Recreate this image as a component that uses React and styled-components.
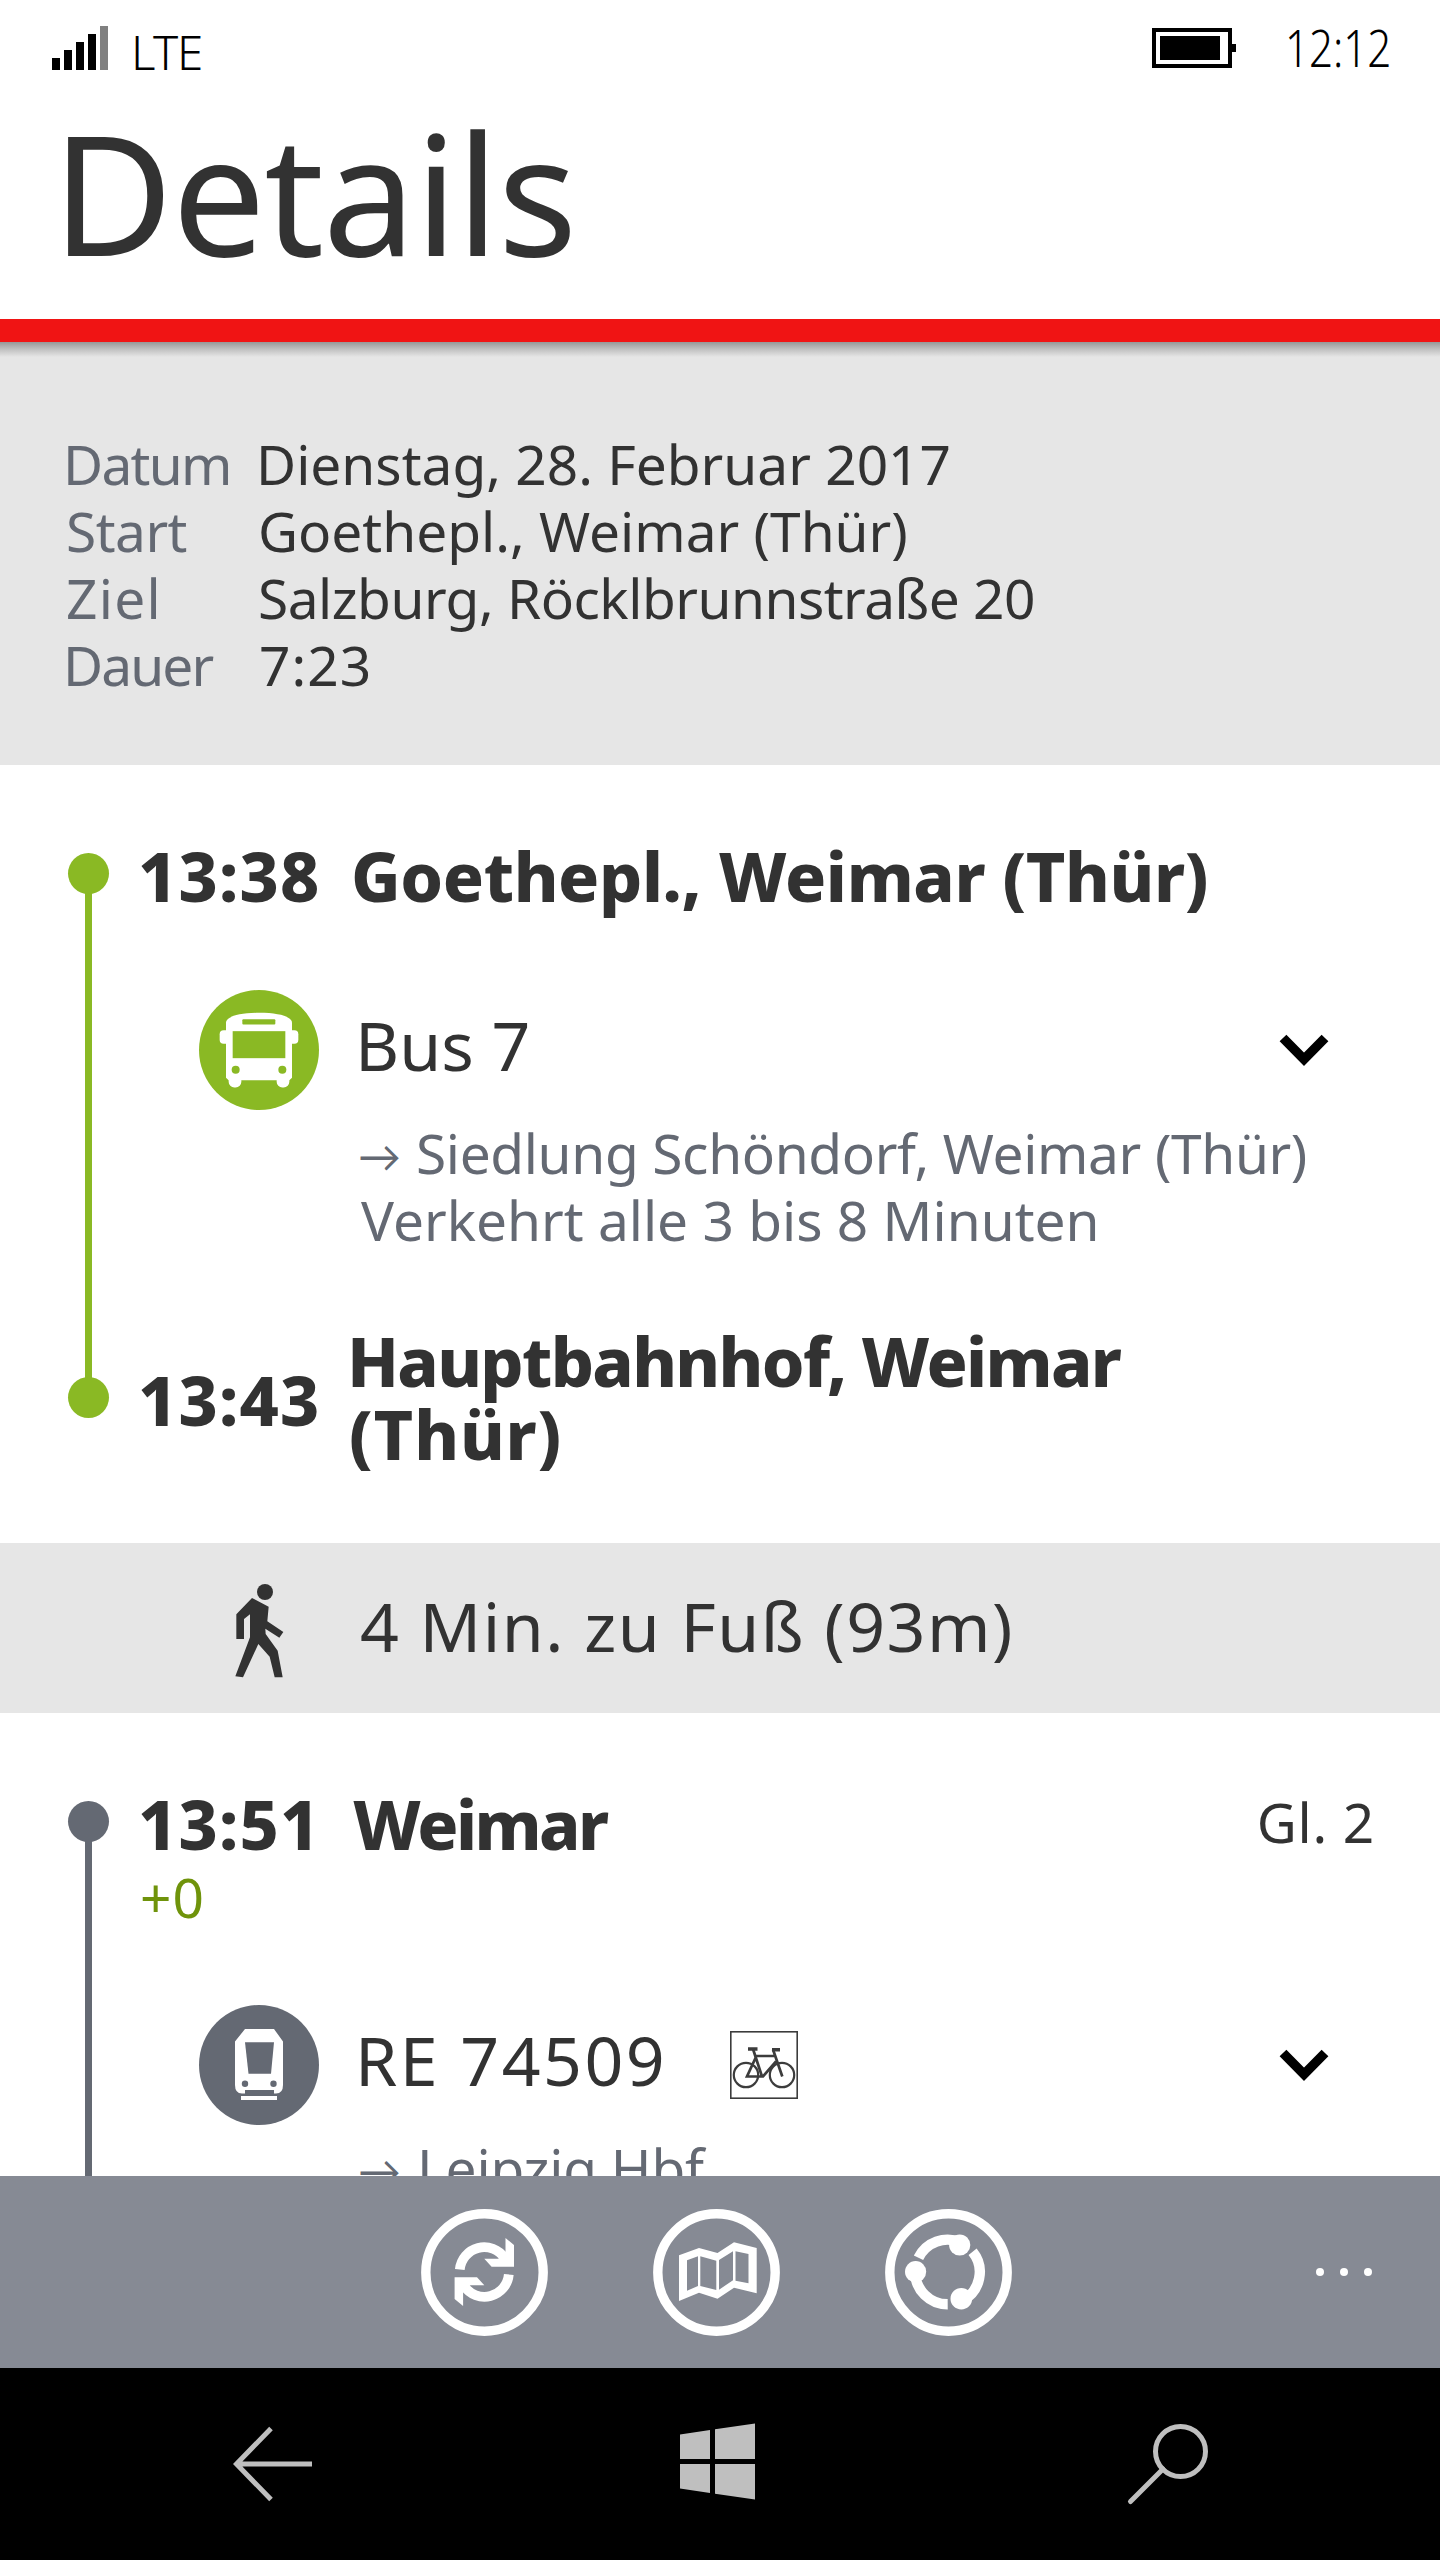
import React from "react";
import styled, { createGlobalStyle } from "styled-components";

const GlobalStyle = createGlobalStyle`
  *, *::before, *::after { box-sizing: border-box; }
  body { margin: 0; background: #fff; }
  svg { display: block; flex: none; }
`;

const INK = "#323232";
const GREY = "#646973";
const GREEN = "#8ab924";
const BAR = "#868a94";

const Screen = styled.main`
  width: 1440px;
  height: 2560px;
  display: flex;
  flex-direction: column;
  overflow: hidden;
  background: #fff;
  color: ${INK};
  font-family: "Noto Sans", "Open Sans", sans-serif;
  white-space: nowrap;
`;

const StatusBar = styled.div`
  height: 100px;
  flex: none;
  display: flex;
  align-items: flex-start;
  padding: 26px 52px 0;
  color: #000;
  font-weight: 300;
`;

const Network = styled.span`
  margin: 2px 0 0 23px;
  font-size: 47.5px;
  line-height: 48px;
  letter-spacing: -1.4px;
`;

const Battery = styled.svg`
  margin: 2px 0 0 auto;
`;

const Clock = styled.span`
  width: 104px;
  margin-left: 48px;
  margin-top: -5px;
  font-size: 51px;
  line-height: 52px;
  transform: translateX(1px) scaleX(0.825);
  transform-origin: 0 50%;
`;

const Header = styled.header`
  height: 242px;
  flex: none;
  padding: 9px 52px 0;
  border-bottom: 23px solid #f01414;
`;

const Title = styled.h1`
  margin: 0;
  font-size: 166px;
  line-height: 167px;
  font-weight: 400;
  letter-spacing: -1.3px;
`;

const Summary = styled.dl`
  height: 423px;
  flex: none;
  margin: 0;
  padding: 88px 0 0 63px;
  background: linear-gradient(#979797, #c4c4c4 8px, #e6e6e6 15px);
`;

const SummaryRow = styled.div`
  display: grid;
  grid-template-columns: 193px 1fr;
  font-size: 55px;
  line-height: 67px;
`;

const Label = styled.dt`
  color: ${GREY};
  margin-left: ${(p) => p.$shift || 0}px;
  letter-spacing: ${(p) => p.$track || 0}px;
`;

const Value = styled.dd`
  margin: 0 0 0 ${(p) => p.$shift || 0}px;
  letter-spacing: ${(p) => p.$track || 0}px;
`;

const Leg = styled.section`
  height: ${(p) => p.$height}px;
  flex: none;
  display: flex;
  padding-left: 68px;
  overflow: hidden;
`;

const Rail = styled.div`
  width: 41px;
  flex: none;
  display: flex;
  flex-direction: column;
  align-items: center;
  padding: 88px 0 ${(p) => p.$end}px;
  color: ${(p) => p.$color};
`;

const Dot = styled.i`
  width: 41px;
  height: 41px;
  flex: none;
  border-radius: 50%;
  background: currentColor;
`;

const Line = styled.i`
  width: 7px;
  flex: 1;
  margin: -2px 0;
  background: currentColor;
`;

const LegBody = styled.div`
  flex: 1;
  padding-top: 74px;
`;

const Stop = styled.div`
  display: flex;
  align-items: ${(p) => (p.$centered ? "center" : "flex-start")};
  margin-top: ${(p) => (p.$centered ? 71 : 0)}px;
  padding: 0 68px 0 29px;
  font-size: 68px;
  line-height: 73px;
  font-weight: 800;
`;

const Time = styled.time`
  width: 213px;
  flex: none;
  padding-top: ${(p) => p.$drop || 0}px;
  letter-spacing: 1.2px;
`;

const Station = styled.div`
  flex: 1;
`;

const StationLine = styled.span`
  display: block;
  margin-left: ${(p) => p.$shift || 0}px;
  letter-spacing: ${(p) => p.$track || 0}px;
`;

const Platform = styled.span`
  padding-top: 1px;
  font-size: 55px;
  line-height: 68px;
  font-weight: 400;
  letter-spacing: 0.7px;
  margin-right: -3px;
`;

const Delay = styled.div`
  margin-top: 3px;
  padding-left: 31px;
  font-size: 55px;
  line-height: 67px;
  letter-spacing: 1px;
  color: #6f930b;
`;

const Ride = styled.div`
  height: 120px;
  display: flex;
  align-items: center;
  margin-top: ${(p) => p.$gap}px;
  padding: 0 111px 0 90px;
`;

const RideName = styled.span`
  width: 375px;
  margin-left: 36px;
  padding-bottom: 11px;
  font-size: 68px;
  line-height: 109px;
  letter-spacing: ${(p) => p.$track}px;
`;

const Notes = styled.div`
  margin-top: 9px;
  padding-left: 252px;
  font-size: 55px;
  line-height: 67px;
  color: ${GREY};
`;

const Note = styled.div`
  display: flex;
  letter-spacing: ${(p) => p.$track || 0}px;
`;

const Arrow = styled.span`
  width: ${(p) => p.$width}px;
  font-family: Lato, "Noto Sans", sans-serif;
  font-size: 43px;
  line-height: 73px;
  height: 67px;
  margin-left: -3px;
`;

const Chevron = styled.svg`
  margin-left: auto;
`;

const Walk = styled.div`
  height: 170px;
  flex: none;
  display: flex;
  align-items: center;
  gap: 70px;
  padding-left: 230px;
  background: #e6e6e6;
  font-size: 68px;
  letter-spacing: 1.5px;
`;

const WalkIcon = styled.svg`
  margin-top: 4px;
`;

const WalkText = styled.span`
  line-height: 90px;
  padding-bottom: 4px;
`;

const AppBar = styled.nav`
  height: 192px;
  flex: none;
  display: flex;
  align-items: center;
  gap: 105px;
  padding: 0 68px 0 421px;
  background: ${BAR};
`;

const More = styled.svg`
  margin-left: auto;
`;

const SystemBar = styled.nav`
  height: 192px;
  flex: none;
  display: flex;
  align-items: center;
  justify-content: space-between;
  padding: 0 228px;
  background: #000;
`;

const BusIcon = () => (
  <svg width="120" height="120" viewBox="57 59.5 360 360">
    <circle cx="237" cy="239.5" r="180" fill={GREEN} />
    <g fill="#fff">
      <path d="M138 323V158C138 140 175 128 237 128S336 140 336 158V323L328 330H146Z" />
      <rect x="119" y="180" width="236" height="41" rx="12" />
      <rect x="146" y="305" width="38" height="47" rx="17" />
      <rect x="290" y="305" width="38" height="47" rx="17" />
    </g>
    <g fill={GREEN}>
      <rect x="187" y="147" width="99" height="16" rx="3" />
      <rect x="158" y="183" width="158" height="81" />
      <circle cx="167" cy="299" r="12" />
      <circle cx="307" cy="299" r="12" />
    </g>
  </svg>
);

const TrainIcon = () => (
  <svg width="120" height="120" viewBox="0 0 120 120">
    <circle cx="60" cy="60" r="60" fill={GREY} />
    <path
      fill="#fff"
      d="M46 24H75L84 36.5V80Q84 88.5 77 88.5H75V85H46V88.5H43Q36 88.5 36 80V36.5ZM42 91H78V95H42Z"
    />
    <path fill={GREY} d="M46 37.3H75L72 68.7H49.5Z" />
    <circle cx="46" cy="78.7" r="3.2" fill={GREY} />
    <circle cx="74.5" cy="78.7" r="3.2" fill={GREY} />
  </svg>
);

const BikeIcon = () => (
  <svg width="68" height="68" viewBox="0 0 68 68" fill="none" stroke="#3c3c3c">
    <rect x=".75" y=".75" width="66.5" height="66.5" strokeWidth="1.7" />
    <g strokeWidth="2.2">
      <circle cx="16" cy="44" r="12.2" />
      <circle cx="52" cy="44" r="12.2" />
    </g>
    <path strokeWidth="2.7" d="M23 18L32 45.5M25 25H45M43 18.5L52.3 45.5M46 30.5L33 45.5H17L25.5 27" />
    <path strokeWidth="3.4" d="M18 18H27.5M42 18.8H50" />
  </svg>
);

const Expand = () => (
  <Chevron width="50" height="34" viewBox="0 0 50 34">
    <path d="M4 5L25 26.3L46 5" fill="none" stroke="#000" strokeWidth="9.5" />
  </Chevron>
);

const Ring = ({ children }) => (
  <svg width="127" height="127" viewBox="0 0 127 127">
    <circle cx="63.5" cy="63.5" r="58.7" fill="none" stroke="#fff" strokeWidth="9.4" />
    {children}
  </svg>
);

const HalfTurn = (props) => (
  <g {...props}>
    <path d="M38.8 60.5A24.5 24.5 0 0 1 83.5 49" fill="none" stroke="#fff" strokeWidth="9.7" />
    <path d="M84.5 29L93 36V57.7H70.6L63.3 49.7H77L84.5 46Z" fill="#fff" />
  </g>
);

export default function App() {
  return (
    <>
      <GlobalStyle />
      <Screen>
        <StatusBar>
          <svg width="56" height="44" viewBox="0 0 56 44">
            <path d="M0 32h8v12h-8zM12 24h8v20h-8zM24 16h8v28h-8zM36 8h8v36h-8z" />
            <path d="M48 0h8v44h-8z" fill="#808080" />
          </svg>
          <Network>LTE</Network>
          <Battery width="84" height="40" viewBox="0 0 84 40">
            <rect x="2" y="2" width="76" height="36" fill="none" stroke="#000" strokeWidth="4" />
            <path d="M8 8h60v24H8zM80 16h4v8h-4z" />
          </Battery>
          <Clock>12:12</Clock>
        </StatusBar>

        <Header>
          <Title>Details</Title>
        </Header>

        <Summary>
          <SummaryRow>
            <Label $track={-1.7}>Datum</Label>
            <Value>Dienstag, 28. Februar 2017</Value>
          </SummaryRow>
          <SummaryRow>
            <Label $shift={3} $track={-0.5}>Start</Label>
            <Value $shift={2}>Goethepl., Weimar (Thür)</Value>
          </SummaryRow>
          <SummaryRow>
            <Label $shift={3} $track={1.3}>Ziel</Label>
            <Value $shift={2} $track={-0.5}>Salzburg, Röcklbrunnstraße 20</Value>
          </SummaryRow>
          <SummaryRow>
            <Label $track={-1.9}>Dauer</Label>
            <Value $shift={3} $track={1}>7:23</Value>
          </SummaryRow>
        </Summary>

        <Leg $height={778}>
          <Rail $color={GREEN} $end={125}>
            <Dot />
            <Line />
            <Dot />
          </Rail>
          <LegBody>
            <Stop>
              <Time>13:38</Time>
              <Station>
                <StationLine $track={-0.37}>Goethepl., Weimar (Thür)</StationLine>
              </Station>
            </Stop>
            <Ride $gap={78}>
              <BusIcon />
              <RideName $track={0}>Bus 7</RideName>
              <Expand />
            </Ride>
            <Notes>
              <Note $track={-0.36}>
                <Arrow $width={58}>→</Arrow>Siedlung Schöndorf, Weimar (Thür)
              </Note>
              <Note>Verkehrt alle 3 bis 8 Minuten</Note>
            </Notes>
            <Stop $centered>
              <Time $drop={5}>13:43</Time>
              <Station>
                <StationLine $shift={-4} $track={-1.65}>Hauptbahnhof, Weimar</StationLine>
                <StationLine $shift={-2} $track={0.9}>(Thür)</StationLine>
              </Station>
            </Stop>
          </LegBody>
        </Leg>

        <Walk>
          <WalkIcon width="60" height="100" viewBox="150 60 180 300" fill={INK}>
            <circle cx="255" cy="96" r="24" />
            <path d="M216 114L266 140L262 184L310 216L298 233L256 206L257 222L293 272L308 352H284L269 290L235 252L189 352L166 349L210 232V163L192 177V237H169V163Z" />
          </WalkIcon>
          <WalkText>4 Min. zu Fuß (93m)</WalkText>
        </Walk>

        <Leg $height={463}>
          <Rail $color={GREY} $end={0}>
            <Dot />
            <Line />
          </Rail>
          <LegBody>
            <Stop>
              <Time>13:51</Time>
              <Station>
                <StationLine $shift={2} $track={-2.5}>Weimar</StationLine>
              </Station>
              <Platform>Gl. 2</Platform>
            </Stop>
            <Delay>+0</Delay>
            <Ride $gap={75}>
              <TrainIcon />
              <RideName $track={2.5}>RE 74509</RideName>
              <BikeIcon />
              <Expand />
            </Ride>
            <Notes>
              <Note $track={-0.2}>
                <Arrow $width={59}>→</Arrow>Leipzig Hbf
              </Note>
            </Notes>
          </LegBody>
        </Leg>

        <AppBar>
          <Ring>
            <HalfTurn />
            <HalfTurn transform="rotate(180 63.3 63)" />
          </Ring>
          <Ring>
            <path
              fill="#fff"
              fillRule="evenodd"
              d="M26 46.3L46 39L64.5 44L81 33.3L103.7 39V84.3L81 78.7L64.5 89.7L46 83.7L26 92ZM34 51.3V81.7L45 77V47.3ZM47.3 47.3V77L63.3 81V51.7ZM66 51V80.7L80 71.3V42.3ZM82.5 42.3V71.7L95.5 74.3V45Z"
            />
          </Ring>
          <Ring>
            <path
              fill="none"
              stroke="#fff"
              strokeWidth="10.4"
              d="M33.5 48.8A32.3 32.3 0 0 1 75.6 33.5M30.2 63A32.3 32.3 0 0 0 62.7 95.3M77.3 91.7A32.3 32.3 0 0 0 87.6 42.7"
            />
            <g fill="#fff">
              <circle cx="30.6" cy="62.7" r="10.6" />
              <circle cx="74.7" cy="36" r="10.6" />
              <circle cx="76.3" cy="89.7" r="10.8" />
            </g>
          </Ring>
          <More width="56" height="8" viewBox="0 0 56 8" fill="#fff">
            <circle cx="4" cy="4" r="4" />
            <circle cx="28" cy="4" r="4" />
            <circle cx="52" cy="4" r="4" />
          </More>
        </AppBar>

        <SystemBar>
          <svg width="90" height="90" viewBox="0 0 90 90" fill="none" stroke="#bfbfbf" strokeWidth="5">
            <path d="M43 9.5L8.5 45L43 80.5M9 45H84" />
          </svg>
          <svg width="90" height="90" viewBox="3 0 90 90" fill="#bfbfbf">
            <path d="M8 15.5L38 11V40H8ZM43 10.3L83 4.5V40H43ZM8 45H38V74L8 69.5ZM43 45H83V80.5L43 74.7Z" />
          </svg>
          <svg width="90" height="90" viewBox="0 0 90 90" fill="none" stroke="#bfbfbf" strokeWidth="5" strokeLinecap="round">
            <circle cx="58.5" cy="32.5" r="25" />
            <path d="M41 50L8.5 82.5" />
          </svg>
        </SystemBar>
      </Screen>
    </>
  );
}
